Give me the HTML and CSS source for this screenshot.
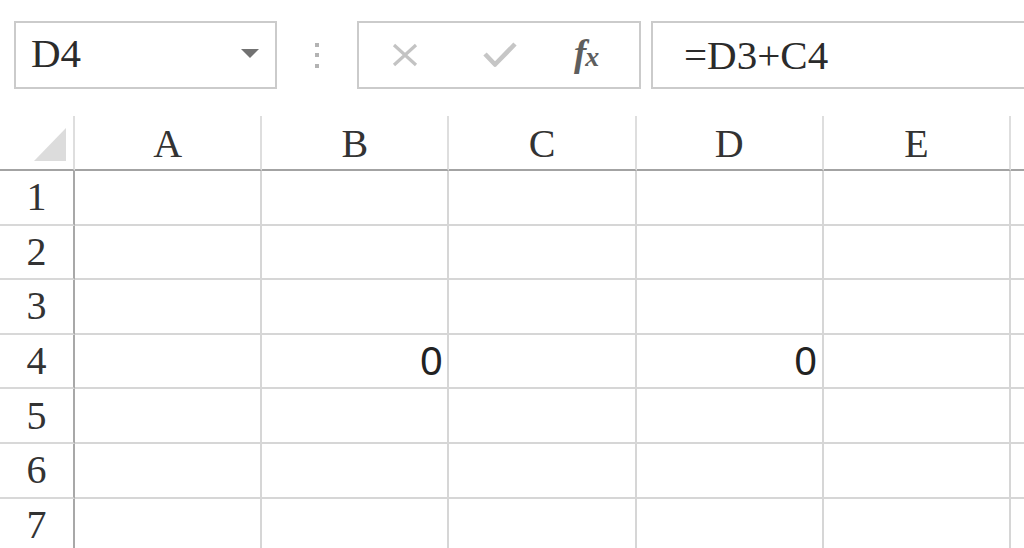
FILE: index.html
```html
<!DOCTYPE html>
<html>
<head>
<meta charset="utf-8">
<link rel="stylesheet" href="styles.css">
</head>
<body>
<div class="toolbar">
  <div class="namebox"><span class="name">D4</span><span class="caret"></span></div>
  <div class="grip"><i></i><i></i><i></i></div>
  <div class="fbtns">
    <svg class="cancel" width="28" height="24" viewBox="0 0 28 24"><path d="M3 2 L25 22 M25 2 L3 22" stroke="#c3c3c3" stroke-width="3.2" fill="none"/></svg>
    <svg class="ok" width="34" height="26" viewBox="0 0 34 26"><path d="M2 13 L12 23.5 L32 3" stroke="#c6c6c6" stroke-width="4.6" fill="none" stroke-linejoin="round"/></svg>
    <span class="fx"><i class="f">f</i><i class="x">x</i></span>
  </div>
  <div class="formula">=D3+C4</div>
</div>
<div class="sheet">
  <div class="corner"><span class="tri"></span></div>
  <div class="colh">A</div><div class="colh">B</div><div class="colh">C</div><div class="colh">D</div><div class="colh">E</div><div class="colh"></div>

  <div class="rowh">1</div><div class="cell"></div><div class="cell"></div><div class="cell"></div><div class="cell"></div><div class="cell"></div><div class="cell"></div>
  <div class="rowh">2</div><div class="cell"></div><div class="cell"></div><div class="cell"></div><div class="cell"></div><div class="cell"></div><div class="cell"></div>
  <div class="rowh">3</div><div class="cell"></div><div class="cell"></div><div class="cell"></div><div class="cell"></div><div class="cell"></div><div class="cell"></div>
  <div class="rowh">4</div><div class="cell"></div><div class="cell num">0</div><div class="cell"></div><div class="cell num">0</div><div class="cell"></div><div class="cell"></div>
  <div class="rowh">5</div><div class="cell"></div><div class="cell"></div><div class="cell"></div><div class="cell"></div><div class="cell"></div><div class="cell"></div>
  <div class="rowh">6</div><div class="cell"></div><div class="cell"></div><div class="cell"></div><div class="cell"></div><div class="cell"></div><div class="cell"></div>
  <div class="rowh">7</div><div class="cell"></div><div class="cell"></div><div class="cell"></div><div class="cell"></div><div class="cell"></div><div class="cell"></div>
</div>
</body>
</html>
```
FILE: styles.css
```css
* { box-sizing: border-box; }
html, body {
  margin: 0;
  padding: 0;
  background: #ffffff;
  width: 1024px;
  height: 548px;
  overflow: hidden;
  font-family: "Liberation Serif", "Times New Roman", serif;
  color: #2b2b2b;
}
.toolbar {
  display: flex;
  align-items: center;
  padding: 21px 0 0 14px;
  width: 1024px;
}
.namebox {
  width: 263px;
  height: 68px;
  border: 2px solid #cbcbcb;
  display: flex;
  align-items: center;
  justify-content: space-between;
  padding: 0 16px 0 15px;
}
.name {
  font-size: 41px;
  line-height: 1;
  margin-top: -3px;
}
.caret {
  width: 0;
  height: 0;
  border-left: 9px solid transparent;
  border-right: 9px solid transparent;
  border-top: 9px solid #727272;
  margin-top: -4px;
}
.grip {
  display: flex;
  flex-direction: column;
  gap: 6.5px;
  margin: 0 38px;
}
.grip i {
  display: block;
  width: 4px;
  height: 4px;
  background: #b3b3b3;
}
.fbtns {
  width: 284px;
  height: 68px;
  border: 2px solid #cbcbcb;
  display: flex;
  align-items: center;
  padding-left: 32px;
}
.fbtns .cancel { margin-top: -1px; }
.fbtns .ok { margin-left: 64px; margin-top: -2px; }
.fx {
  margin-left: 57px;
  color: #5e5e5e;
  font-weight: bold;
  line-height: 1;
  display: flex;
  align-items: baseline;
  margin-top: -4px;
}
.fx .f { font-size: 37px; }
.fx .x { font-size: 28px; margin-left: -1px; }
.formula {
  flex: 1;
  margin-left: 10px;
  height: 68px;
  border: 2px solid #cbcbcb;
  border-right: none;
  display: flex;
  align-items: center;
  padding-left: 31px;
  font-size: 41px;
  line-height: 1;
}
.sheet {
  margin-top: 27px;
  display: grid;
  grid-template-columns: 75px repeat(6, 187.2px);
  grid-template-rows: 55px repeat(7, 54.6px);
  width: 1024px;
  overflow: hidden;
}
.corner {
  border-right: 2px solid #dedede;
  border-bottom: 2px solid #a3a3a3;
  display: flex;
  justify-content: flex-end;
  align-items: flex-end;
  padding: 0 7px 8px 0;
}
.tri {
  width: 0;
  height: 0;
  border-left: 32px solid transparent;
  border-bottom: 33px solid #dcdcdc;
}
.colh {
  border-right: 2px solid #dedede;
  border-bottom: 2px solid #a3a3a3;
  display: flex;
  align-items: center;
  justify-content: center;
  font-size: 40px;
  line-height: 1;
  color: #333;
  padding-top: 2px;
}
.rowh {
  border-right: 2px solid #a8a8a8;
  border-bottom: 2px solid #d8d8d8;
  display: flex;
  align-items: center;
  justify-content: center;
  font-size: 40px;
  line-height: 1;
  color: #333;
}
.cell {
  border-right: 2px solid #d6d6d6;
  border-bottom: 2px solid #d6d6d6;
}
.num {
  display: flex;
  align-items: center;
  justify-content: flex-end;
  padding-right: 5px;
  font-family: "Liberation Sans", Arial, sans-serif;
  font-size: 40px;
  line-height: 1;
  color: #222;
}
```
